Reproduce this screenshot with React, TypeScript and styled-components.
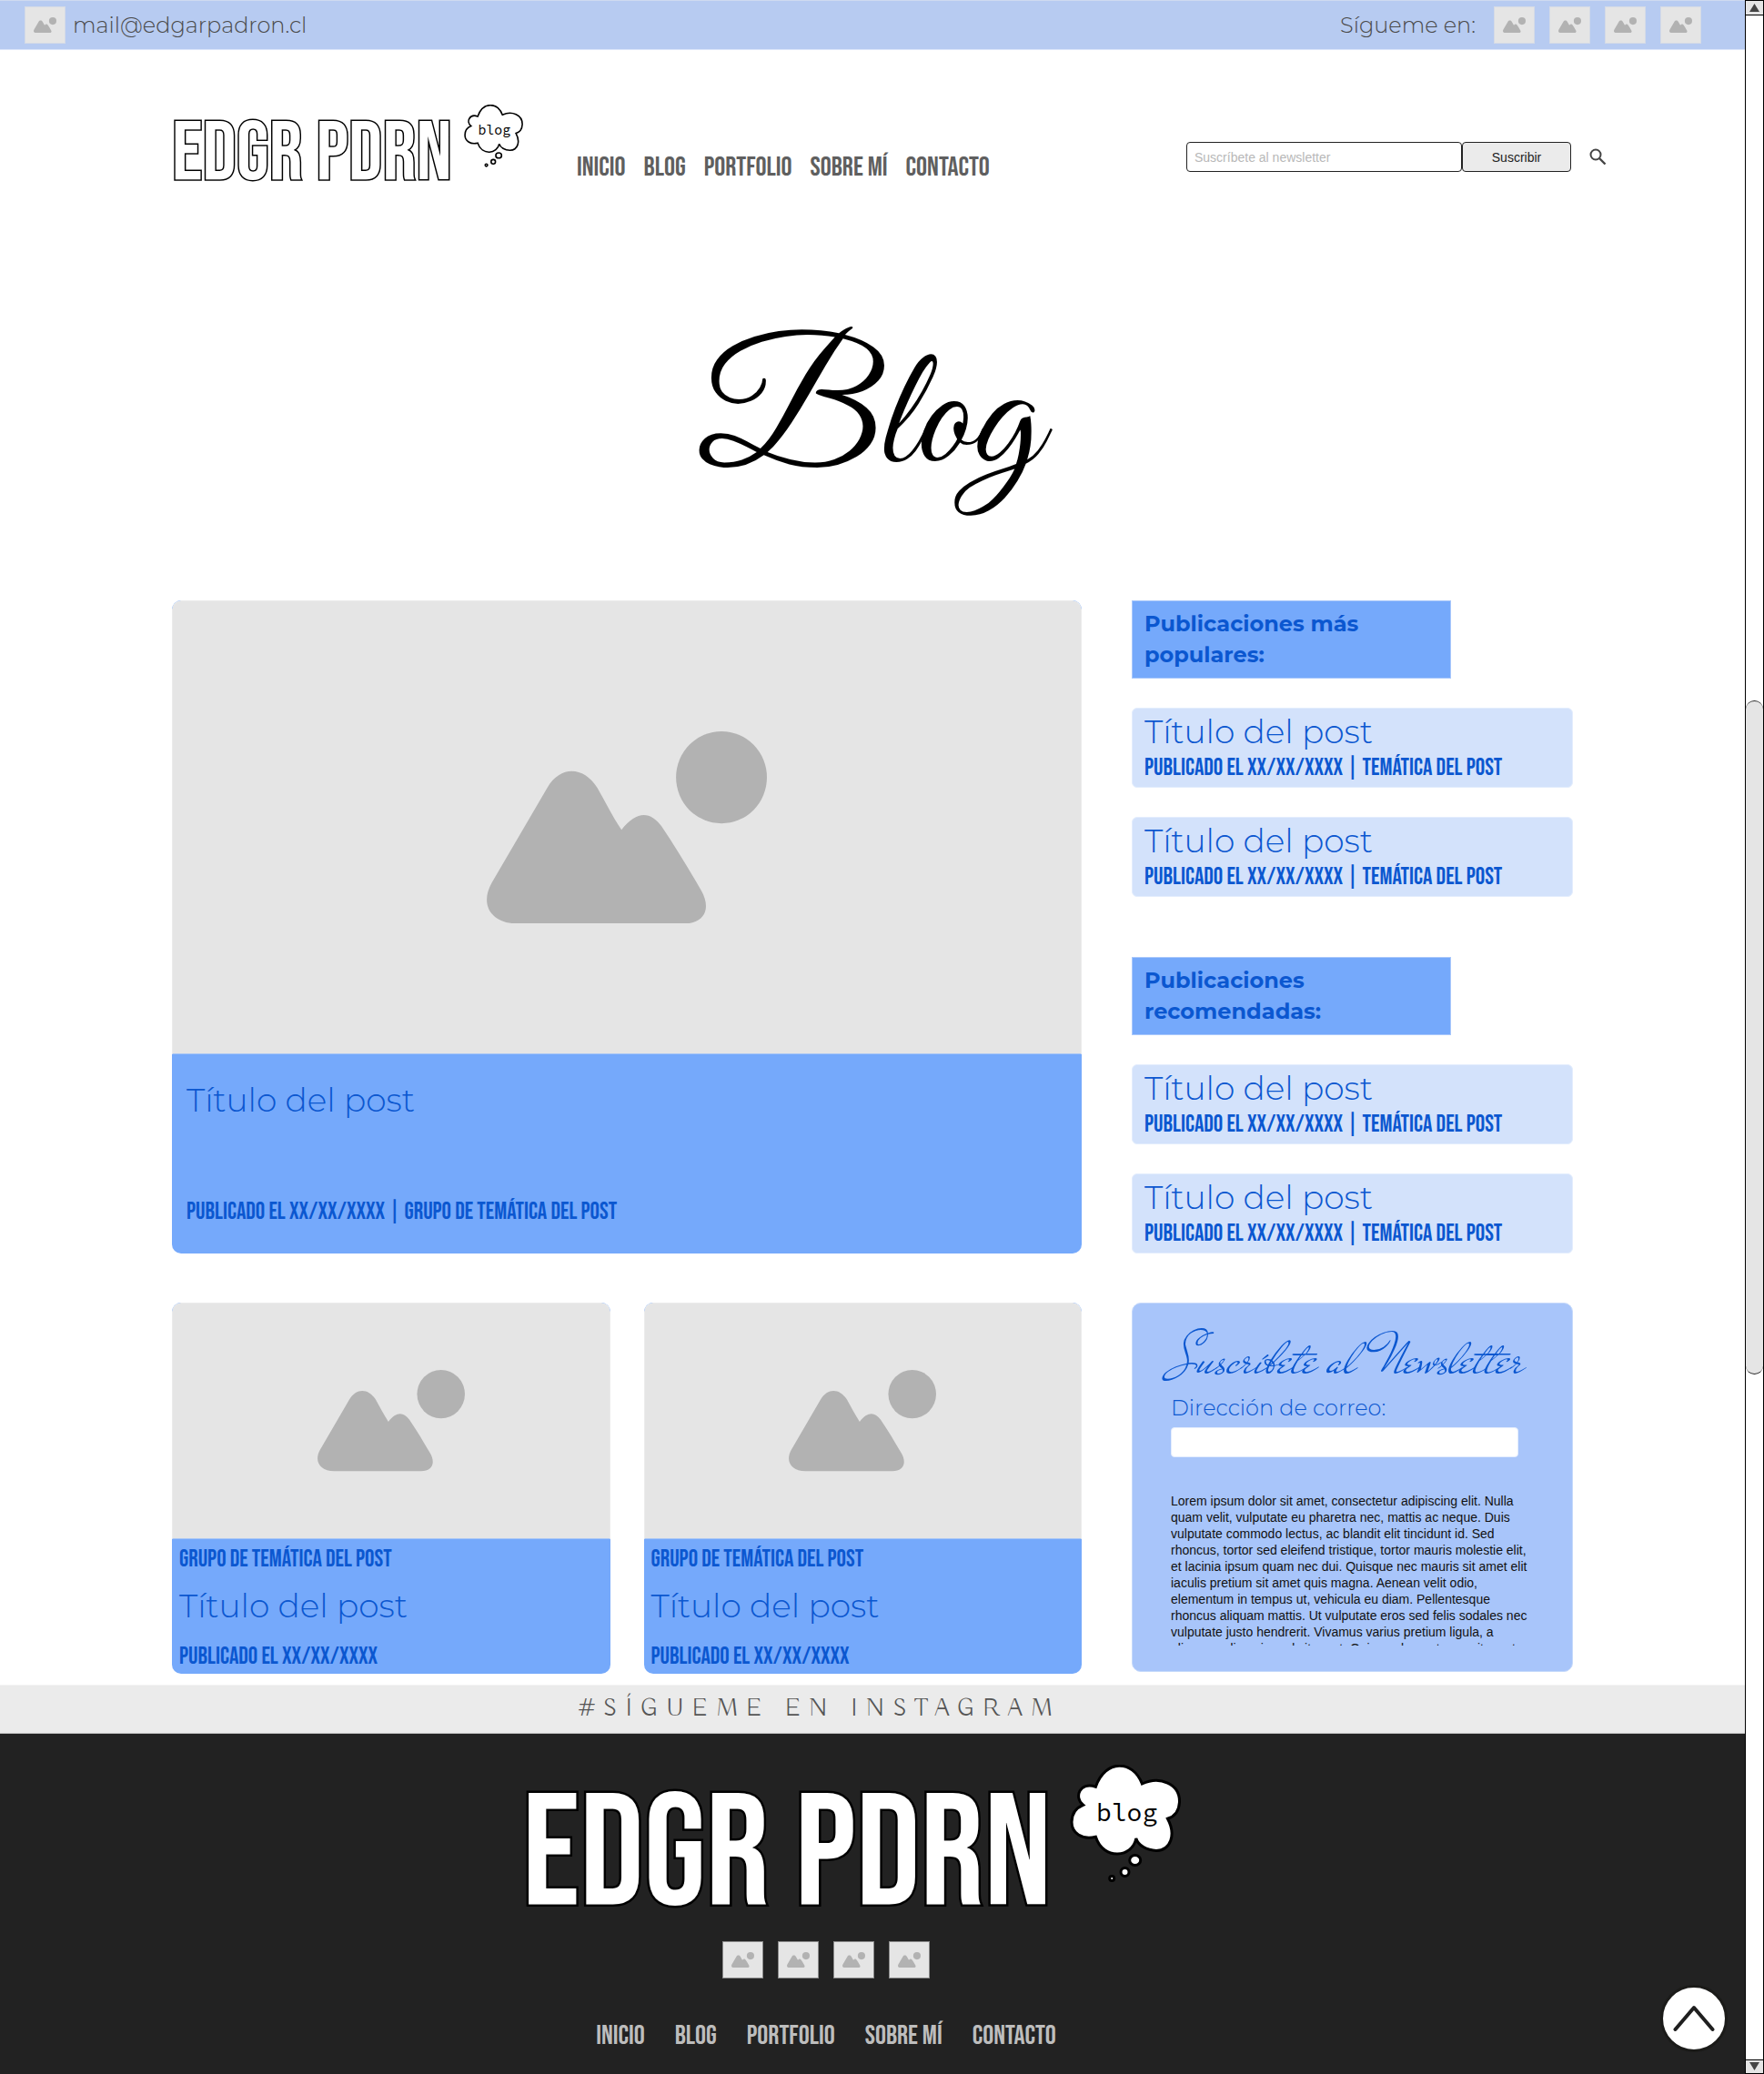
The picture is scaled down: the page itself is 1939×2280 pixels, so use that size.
import React from "react";
import styled, { createGlobalStyle } from "styled-components";

const sans = `Montserrat, Inter, "Noto Sans", sans-serif`;
const condensed = `"Bebas Neue", "Liberation Sans Narrow", "DejaVu Sans Condensed", sans-serif`;
const body = `Arial, "Liberation Sans", sans-serif`;
const script = `"Great Vibes", "Liberation Serif", serif`;
const handwriting = `"Mr De Haviland", "Liberation Serif", serif`;
const display = `Buda, Lato, sans-serif`;
const mono = `"Source Code Pro", "DejaVu Sans Mono", monospace`;

const color = {
  ink: "#0b57d0",
  accent: "#75a9fb",
  soft: "#d3e2fb",
  panel: "#a8c5fa",
  bar: "#b7cbf1",
  grey: "#e5e5e5",
  shape: "#b2b2b2",
  band: "#ebebeb",
  dark: "#222222",
};

const GlobalStyle = createGlobalStyle`
  *, *::before, *::after { box-sizing: border-box; }
  body { margin: 0; background: #fff; font-family: ${body}; }
  h1, h2, h3, p { margin: 0; font-weight: 400; }
  a { color: inherit; text-decoration: none; }
  button, input { font: inherit; }
`;

const Page = styled.div`
  display: flex;
  min-height: 100vh;
`;

const Main = styled.div`
  position: relative;
  display: flex;
  flex: 1;
  flex-direction: column;
  min-width: 0;
`;

const TopBar = styled.div`
  display: flex;
  align-items: center;
  justify-content: space-between;
  height: 55px;
  padding: 0 48px 0 27px;
  border-top: 1px solid #cfdaf0;
  border-bottom: 1px solid #dbe6fa;
  background: ${color.bar};
  color: #4a4a4a;
  font: 300 24px/30px ${sans};
`;

const Contact = styled.a`
  display: flex;
  align-items: center;
  gap: 8px;
`;

const Social = styled.div`
  display: flex;
  align-items: center;
  gap: 16px;
`;

const SocialLabel = styled.span`
  margin-right: 4px;
`;

const IconTile = styled.a<{ $edge?: string }>`
  display: grid;
  place-items: center;
  width: 45px;
  height: 41px;
  border: 1px solid ${(p) => p.$edge ?? "#d5dbe6"};
  background: ${color.grey};
`;

const Header = styled.header`
  display: flex;
  align-items: flex-end;
  padding: 60px 152px 0 189px;
`;

const Logo = styled.a`
  display: flex;
  align-items: flex-start;
  justify-content: space-between;
  flex: none;
  width: 387px;
  height: 84px;
  padding-bottom: 2px;
`;

const Wordmark = styled.span<{ $size: number; $stroke: number }>`
  align-self: flex-end;
  color: #fff;
  font-family: ${condensed};
  font-size: ${(p) => p.$size}px;
  line-height: 0.6;
  white-space: nowrap;
  paint-order: stroke fill;
  -webkit-text-stroke: ${(p) => p.$stroke}px #000;
`;

const Nav = styled.nav<{ $gap: number; $tone: string }>`
  display: flex;
  gap: ${(p) => p.$gap}px;
  color: ${(p) => p.$tone};
  font: 400 30px/30px ${condensed};
  white-space: nowrap;
`;

const HeaderNav = styled.div`
  margin: 0 auto 0 58px;
`;

const Subscribe = styled.form`
  display: flex;
  align-items: center;
  margin-bottom: 10px;
  font-size: 14px;
`;

const SubscribeInput = styled.input`
  width: 303px;
  height: 33px;
  padding: 0 8px;
  border: 1px solid #222;
  border-radius: 4px;
  background: #fff;
  &::placeholder { color: #b8b8b8; }
`;

const SubscribeButton = styled.button`
  width: 120px;
  height: 33px;
  border: 1px solid #222;
  border-radius: 4px;
  background: ${color.band};
  color: #222;
`;

const SearchButton = styled.button`
  display: grid;
  margin-left: 20px;
  padding: 0;
  border: 0;
  background: none;
`;

const Title = styled.h1`
  padding: 146px 8px 75px 0;
  color: #000;
  font: 400 188px/240px ${script};
  text-align: center;
`;

const Content = styled.main`
  display: grid;
  grid-template-columns: minmax(0, 1000fr) minmax(0, 485fr);
  gap: 54px 55px;
  padding: 0 189px 12px;
`;

const Card = styled.article`
  display: flex;
  flex-direction: column;
  overflow: hidden;
  border-radius: 10px;
  background: ${color.accent};
  color: ${color.ink};
`;

const Picture = styled.div<{ $height: number }>`
  display: grid;
  place-items: center;
  height: ${(p) => p.$height}px;
  border: 1px solid #ebebeb;
  border-bottom-color: #a9c6f5;
  border-radius: 10px 10px 0 0;
  background: ${color.grey};
`;

const FeaturedText = styled.div`
  display: flex;
  flex: 1;
  flex-direction: column;
  justify-content: space-between;
  padding: 28px 16px 32px;
`;

const PostTitle = styled.h3`
  font: 300 36px/44px ${sans};
`;

const CardText = styled.div`
  display: flex;
  flex-direction: column;
  gap: 15px;
  padding: 10px 8px 5px;

  ${PostTitle} {
    margin-bottom: 7px;
  }
`;

const Meta = styled.p`
  font: 400 26px/26px ${condensed};
  white-space: nowrap;
`;

const Pair = styled.div`
  display: grid;
  grid-template-columns: 1fr 1fr;
  gap: 37px;
`;

const Sidebar = styled.aside`
  display: flex;
  flex-direction: column;
  gap: 66px;
`;

const Group = styled.section`
  display: flex;
  flex-direction: column;
  gap: 32px;
`;

const GroupTitle = styled.h2`
  width: 351px;
  padding: 8px 80px 8px 13px;
  border: 1px solid #a9c8fb;
  background: ${color.accent};
  color: ${color.ink};
  font: 700 24px/34px ${sans};
`;

const ListPost = styled.article`
  display: flex;
  flex-direction: column;
  gap: 6px;
  height: 88px;
  padding: 3px 13px;
  border: 1px solid #e3edfd;
  border-radius: 6px;
  background: ${color.soft};
  color: ${color.ink};
`;

const Newsletter = styled.form`
  display: flex;
  flex-direction: column;
  height: 406px;
  padding: 34px 42px 28px;
  border: 1px solid #c5d9fb;
  border-radius: 10px;
  background: ${color.panel};
`;

const NewsletterTitle = styled.h2`
  color: ${color.ink};
  font: 400 64px/56px ${handwriting};
  white-space: nowrap;
`;

const NewsletterLabel = styled.label`
  margin-top: 10px;
  color: ${color.ink};
  font: 300 24px/30px ${sans};
`;

const NewsletterInput = styled.input`
  width: 382px;
  height: 33px;
  margin-top: 6px;
  padding: 0 8px;
  border: 1px solid #e4edfd;
  border-radius: 4px;
  background: #fff;
`;

const Legal = styled.p`
  height: 169px;
  margin-top: 39px;
  overflow: hidden;
  color: #111;
  font-size: 14px;
  line-height: 18px;
`;

const Band = styled.div`
  height: 54px;
  padding-right: 116px;
  border-top: 1px solid #f3f3f3;
  border-bottom: 1px solid #bdbdbd;
  background: ${color.band};
  color: #555;
  font: 300 27px/52px ${display};
  letter-spacing: 9px;
  text-align: center;
`;

const Footer = styled.footer`
  display: flex;
  flex: 1;
  flex-direction: column;
  align-items: center;
  padding: 34px 102px 24px 0;
  background: ${color.dark};
`;

const FooterLogo = styled.a`
  display: flex;
  align-items: flex-start;
  justify-content: space-between;
  width: 726px;
  height: 157px;
  margin-left: 58px;
  padding-bottom: 4px;
`;

const FooterIcons = styled.div`
  display: flex;
  gap: 16px;
  margin: 37px 0 48px;
`;

const ToTop = styled.button`
  position: absolute;
  right: 19px;
  bottom: 24px;
  display: grid;
  place-items: center;
  width: 74px;
  height: 74px;
  padding: 0;
  border: 3px solid #1b1b19;
  border-radius: 50%;
  background: #fff;
`;

const ScrollRail = styled.div`
  display: flex;
  flex: none;
  flex-direction: column;
  width: 21px;
  border: solid #000;
  border-width: 1px 1px 0;
  background: #fff;
`;

const ScrollStep = styled.button<{ $down?: boolean }>`
  display: grid;
  place-items: center;
  height: 16px;
  padding: 0;
  border: solid #000;
  border-width: ${(p) => (p.$down ? "1px 0 1px" : "0 0 1px")};
  background: ${color.grey};
`;

const ScrollGap = styled.div`
  flex: 51;
`;

const ScrollThumb = styled.div`
  flex: 50;
  border: solid #222;
  border-width: 1px 0;
  border-radius: 10px;
  background: ${color.grey};
`;

function Landscape({ width }: { width: number }) {
  return (
    <svg width={width} viewBox="45 39 925 635" fill={color.shape} aria-hidden="true">
      <path d="M245 225C290 150 365 155 410 225C436 270 458 316 490 364C540 300 585 302 622 352C668 420 710 490 752 562C790 628 760 674 696 674H150C60 674 20 612 62 538Z" />
      <ellipse cx="820" cy="191" rx="150" ry="152" />
    </svg>
  );
}

function Bubble({ width }: { width: number }) {
  return (
    <svg width={width} viewBox="-1 -1 124 130" aria-hidden="true">
      <g fill="#fff" stroke="#000" strokeWidth="3">
        <path d="M27.4 23.3C38-7 68-7 78.4 20C98 11 120 20 119.5 40C119 50 114 56 106.4 58.3C116 76 110 93 94 93.500C84 93 74 88 71.8 80C68 101 36 105 27.4 78.3C12 82 1 74 1 62C1 52 7 46 13.6 43.3C3 35 10 17 27.4 23.3Z" />
        <ellipse cx="70.7" cy="104" rx="6" ry="5.500" />
        <circle cx="59.5" cy="117" r="4.500" />
        <circle cx="45.2" cy="124" r="2.500" />
      </g>
      <text x="28" y="61" fontFamily={mono} fontSize="28" fill="#000">
        blog
      </text>
    </svg>
  );
}

const networks = ["Instagram", "Facebook", "Twitter", "LinkedIn"];

function NetworkIcons({ edge }: { edge?: string }) {
  return (
    <>
      {networks.map((name) => (
        <IconTile key={name} href="#" aria-label={name} $edge={edge}>
          <Landscape width={25} />
        </IconTile>
      ))}
    </>
  );
}

const links = ["INICIO", "BLOG", "PORTFOLIO", "SOBRE MÍ", "CONTACTO"];

function NavLinks({ gap, tone }: { gap: number; tone: string }) {
  return (
    <Nav $gap={gap} $tone={tone}>
      {links.map((text) => (
        <a key={text} href="#">{text}</a>
      ))}
    </Nav>
  );
}

function SmallCard() {
  return (
    <Card>
      <Picture $height={260}>
        <Landscape width={162} />
      </Picture>
      <CardText>
        <Meta>GRUPO DE TEMÁTICA DEL POST</Meta>
        <PostTitle>Título del post</PostTitle>
        <Meta>PUBLICADO EL XX/XX/XXXX</Meta>
      </CardText>
    </Card>
  );
}

function PostGroup({ title }: { title: string }) {
  return (
    <Group>
      <GroupTitle>{title}</GroupTitle>
      {[0, 1].map((n) => (
        <ListPost key={n}>
          <PostTitle>Título del post</PostTitle>
          <Meta>PUBLICADO EL XX/XX/XXXX | TEMÁTICA DEL POST</Meta>
        </ListPost>
      ))}
    </Group>
  );
}

export default function App() {
  return (
    <>
      <GlobalStyle />
      <Page>
        <Main>
          <TopBar>
            <Contact href="mailto:mail@edgarpadron.cl">
              <IconTile as="span">
                <Landscape width={25} />
              </IconTile>
              mail@edgarpadron.cl
            </Contact>
            <Social>
              <SocialLabel>Sígueme en:</SocialLabel>
              <NetworkIcons />
            </Social>
          </TopBar>

          <Header>
            <Logo href="#">
              <Wordmark $size={92} $stroke={3}>EDGR PDRN</Wordmark>
              <Bubble width={66} />
            </Logo>
            <HeaderNav>
              <NavLinks gap={20} tone="#5f5f5f" />
            </HeaderNav>
            <Subscribe>
              <SubscribeInput type="email" placeholder="Suscríbete al newsletter" aria-label="Suscríbete al newsletter" />
              <SubscribeButton type="button">Suscribir</SubscribeButton>
              <SearchButton type="button" aria-label="Buscar">
                <svg width="19" height="19" viewBox="0 0 19 19" fill="none" stroke="#444" strokeWidth="2">
                  <circle cx="7" cy="7" r="5.500" />
                  <path d="M11 11L17.500 17.500" strokeWidth="2.400" />
                </svg>
              </SearchButton>
            </Subscribe>
          </Header>

          <Title>Blog</Title>

          <Content>
            <Card>
              <Picture $height={499}>
                <Landscape width={308} />
              </Picture>
              <FeaturedText>
                <PostTitle>Título del post</PostTitle>
                <Meta>PUBLICADO EL XX/XX/XXXX | GRUPO DE TEMÁTICA DEL POST</Meta>
              </FeaturedText>
            </Card>
            <Sidebar>
              <PostGroup title="Publicaciones más populares:" />
              <PostGroup title="Publicaciones recomendadas:" />
            </Sidebar>
            <Pair>
              <SmallCard />
              <SmallCard />
            </Pair>
            <Newsletter>
              <NewsletterTitle>Suscríbete al Newsletter</NewsletterTitle>
              <NewsletterLabel htmlFor="correo">Dirección de correo:</NewsletterLabel>
              <NewsletterInput id="correo" type="email" />
              <Legal>
                Lorem ipsum dolor sit amet, consectetur adipiscing elit. Nulla quam velit, vulputate eu
                pharetra nec, mattis ac neque. Duis vulputate commodo lectus, ac blandit elit tincidunt id.
                Sed rhoncus, tortor sed eleifend tristique, tortor mauris molestie elit, et lacinia ipsum
                quam nec dui. Quisque nec mauris sit amet elit iaculis pretium sit amet quis magna. Aenean
                velit odio, elementum in tempus ut, vehicula eu diam. Pellentesque rhoncus aliquam mattis.
                Ut vulputate eros sed felis sodales nec vulputate justo hendrerit. Vivamus varius pretium
                ligula, a aliquam odio euismod sit amet. Quisque laoreet sem sit amet orci.
              </Legal>
            </Newsletter>
          </Content>

          <Band>#SÍGUEME EN INSTAGRAM</Band>

          <Footer>
            <FooterLogo href="#">
              <Wordmark $size={174} $stroke={5}>EDGR PDRN</Wordmark>
              <Bubble width={124} />
            </FooterLogo>
            <FooterIcons>
              <NetworkIcons edge="#8a8a8a" />
            </FooterIcons>
            <NavLinks gap={33} tone="#bdbdbd" />
          </Footer>

          <ToTop type="button" aria-label="Volver arriba">
            <svg width="46" height="30" viewBox="0 0 46 30" fill="none" stroke="#1f1f1f" strokeWidth="4" strokeLinecap="round" strokeLinejoin="round">
              <path d="M2.500 27L23 3L43.500 27" />
            </svg>
          </ToTop>
        </Main>

        <ScrollRail>
          <ScrollStep type="button" aria-label="Subir">
            <svg width="11" height="9" viewBox="0 0 11 9" fill="#444"><path d="M5.500 0L11 9H0Z" /></svg>
          </ScrollStep>
          <ScrollGap />
          <ScrollThumb />
          <ScrollGap />
          <ScrollStep type="button" aria-label="Bajar" $down>
            <svg width="11" height="9" viewBox="0 0 11 9" fill="#444"><path d="M5.500 9L0 0H11Z" /></svg>
          </ScrollStep>
        </ScrollRail>
      </Page>
    </>
  );
}
